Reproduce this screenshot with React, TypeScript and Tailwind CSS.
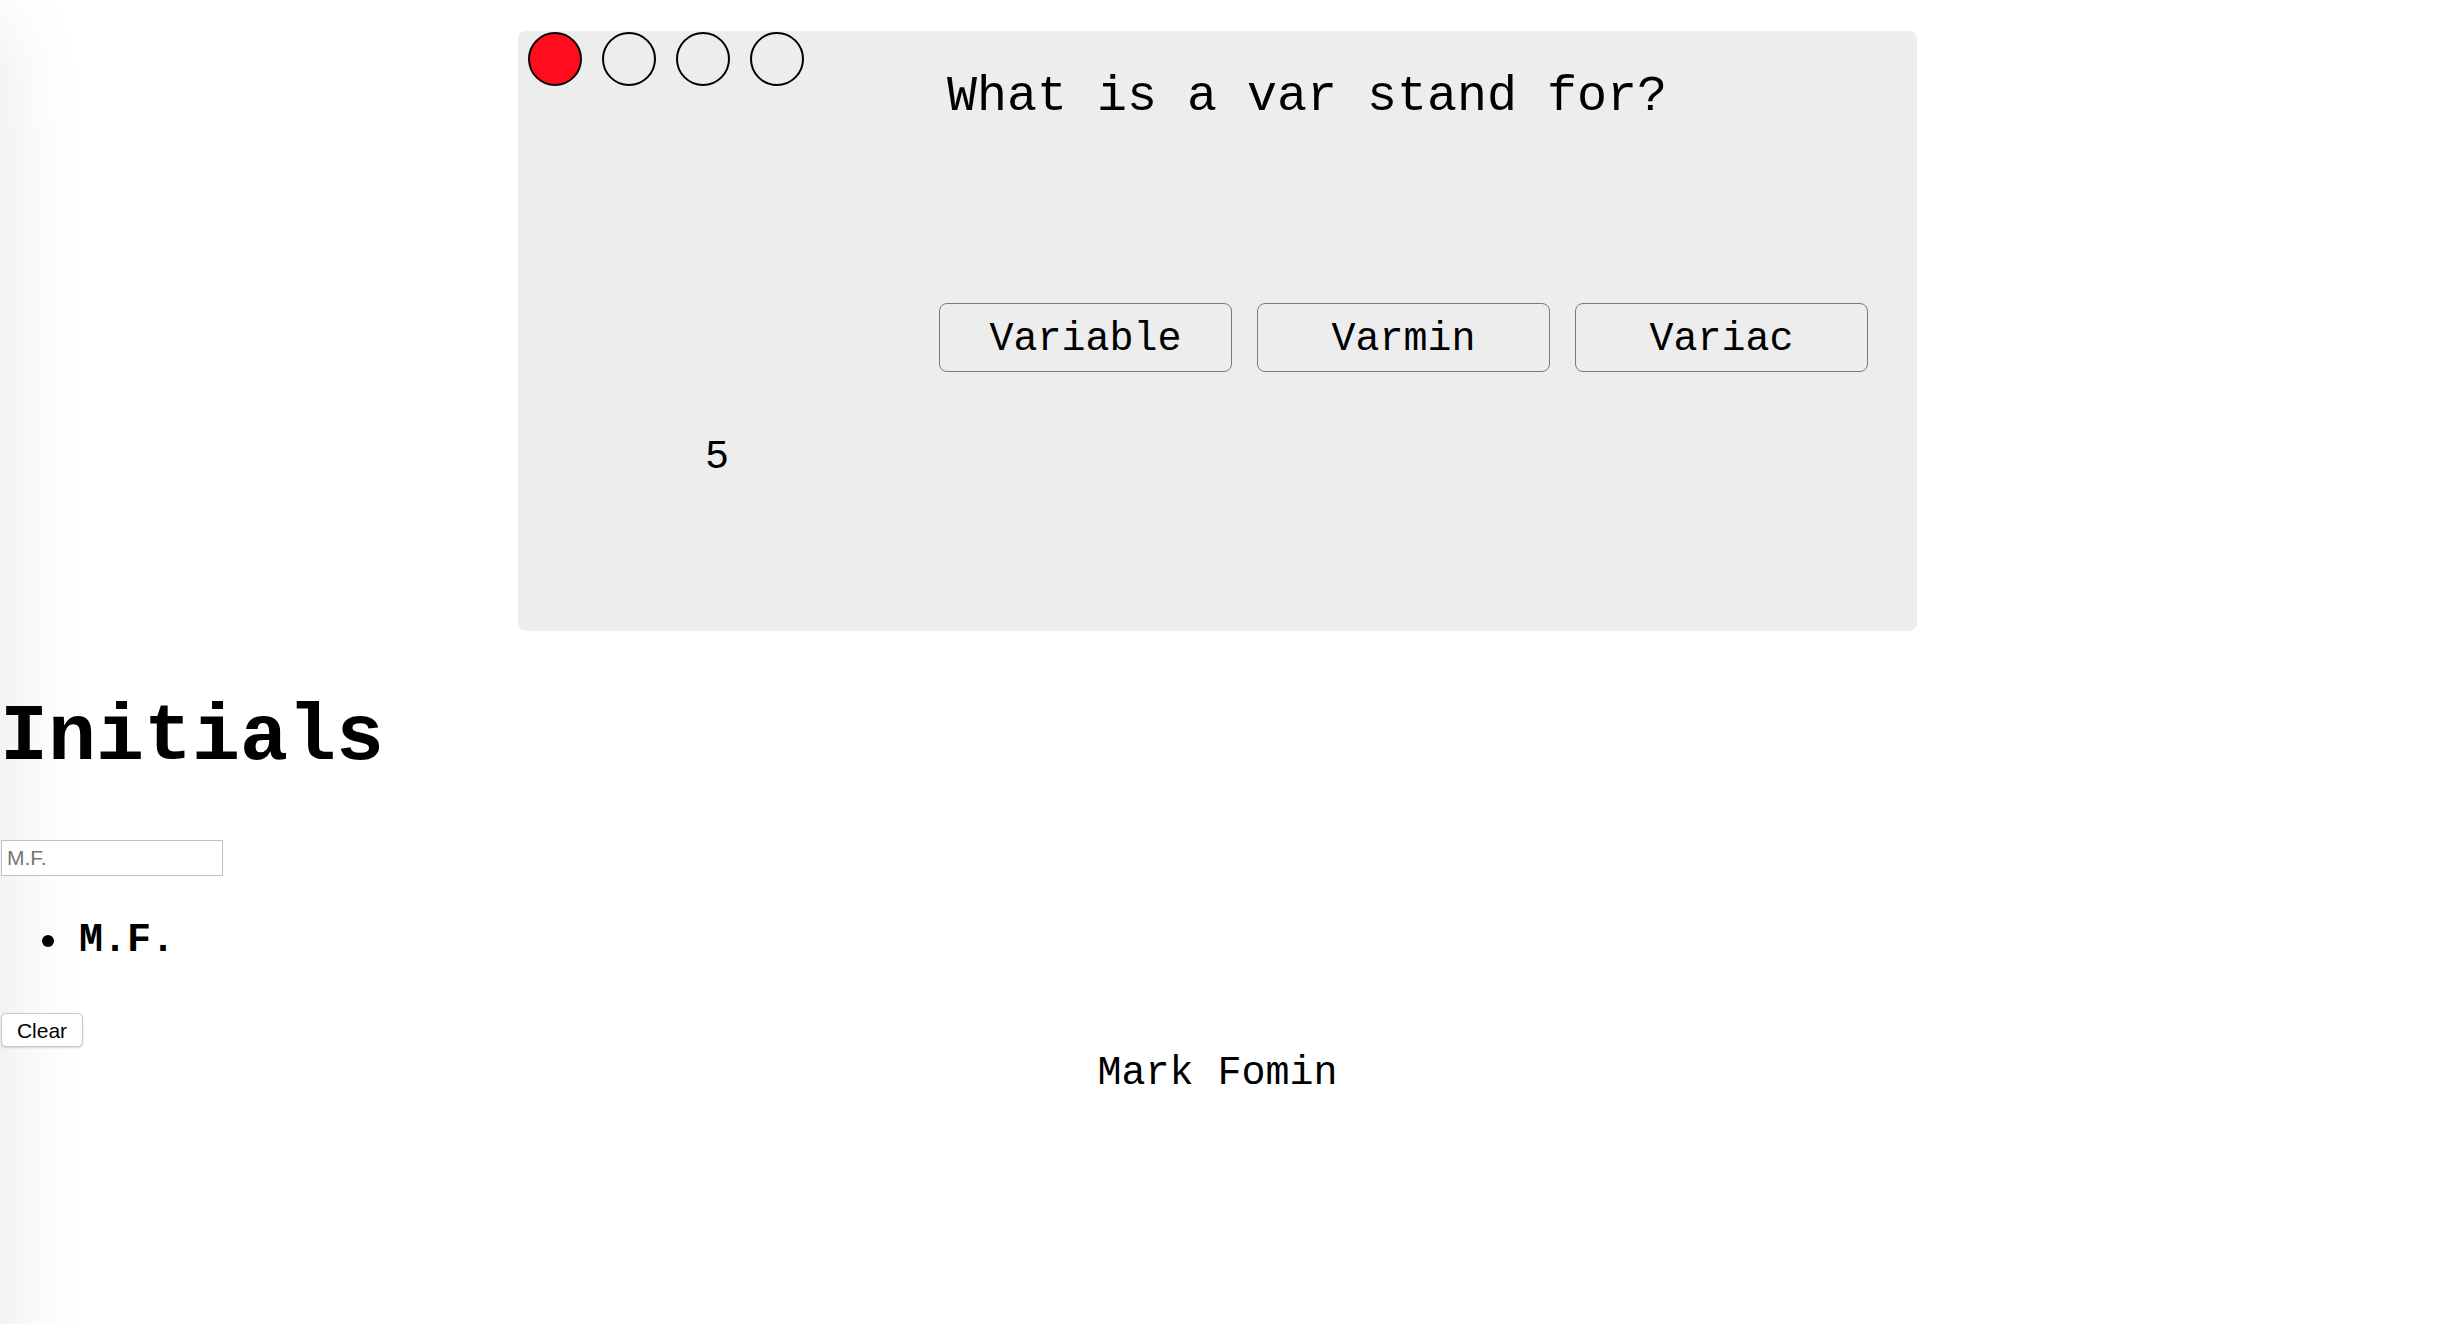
export default function App() {
  const mono = { fontFamily: '"Liberation Mono", "Courier New", monospace' };
  return (
    <div className="relative min-h-[1324px] w-[2450px] overflow-hidden bg-white text-black" style={mono}>
      <div className="pointer-events-none absolute -left-[100px] top-[10px] h-[1500px] w-[100px] rounded-[70px] shadow-[0_0_90px_rgba(0,0,0,0.10)]" />
      <div className="relative w-[2435px] pb-[200px]">
        <div className="mx-auto mt-[31px] flex h-[600px] w-[1399px] rounded-[8px] bg-[#ededed]">
          <div className="flex w-[421px] flex-col">
            <div className="flex gap-[20px] pl-[10px] pt-[1px]">
              <div className="h-[54px] w-[54px] rounded-full border-2 border-black bg-[#ff0d1d]" />
              <div className="h-[54px] w-[54px] rounded-full border-2 border-black" />
              <div className="h-[54px] w-[54px] rounded-full border-2 border-black" />
              <div className="h-[54px] w-[54px] rounded-full border-2 border-black" />
            </div>
            <div className="ml-[187px] mt-[352px] text-[40px] leading-[40px]">5</div>
          </div>
          <div className="flex flex-col">
            <div className="ml-[8px] mt-[41px] text-[50px] leading-[50px] whitespace-pre">What is a var stand for?</div>
            <div className="mt-[181px] flex gap-[25px]">
              <button className="h-[69px] w-[293px] rounded-[8px] border-[1.5px] border-[#7a7a7a] bg-transparent pt-[4px] text-[40px] leading-none" style={mono}>Variable</button>
              <button className="h-[69px] w-[293px] rounded-[8px] border-[1.5px] border-[#7a7a7a] bg-transparent pt-[4px] text-[40px] leading-none" style={mono}>Varmin</button>
              <button className="h-[69px] w-[293px] rounded-[8px] border-[1.5px] border-[#7a7a7a] bg-transparent pt-[4px] text-[40px] leading-none" style={mono}>Variac</button>
            </div>
          </div>
        </div>
        <h1 className="ml-[0px] mt-[67px] text-[80px] font-bold leading-[80px]">Initials</h1>
        <input
          className="mt-[62px] ml-[1px] block h-[36px] w-[222px] border-[1.5px] border-[#c2c2c2] bg-white px-[5px] text-[21px] outline-none placeholder:text-[#757575]"
          style={{ fontFamily: '"Liberation Sans", Arial, sans-serif' }}
          placeholder="M.F."
        />
        <ul className="mt-[45px] text-[40px] font-bold leading-[40px]">
          <li className="flex items-center">
            <span className="ml-[42px] mr-[25px] h-[12px] w-[12px] rounded-full bg-black" />
            <span>M.F.</span>
          </li>
        </ul>
        <button
          className="mt-[52px] ml-[1px] block h-[34px] w-[82px] rounded-[5px] border border-[#c8c8c8] bg-white text-[21px] leading-none shadow-[0_1px_2px_rgba(0,0,0,0.15)]"
          style={{ fontFamily: '"Liberation Sans", Arial, sans-serif' }}
        >
          Clear
        </button>
        <div className="mt-[7px] text-center text-[40px] leading-[40px]">Mark Fomin</div>
      </div>
    </div>
  );
}
